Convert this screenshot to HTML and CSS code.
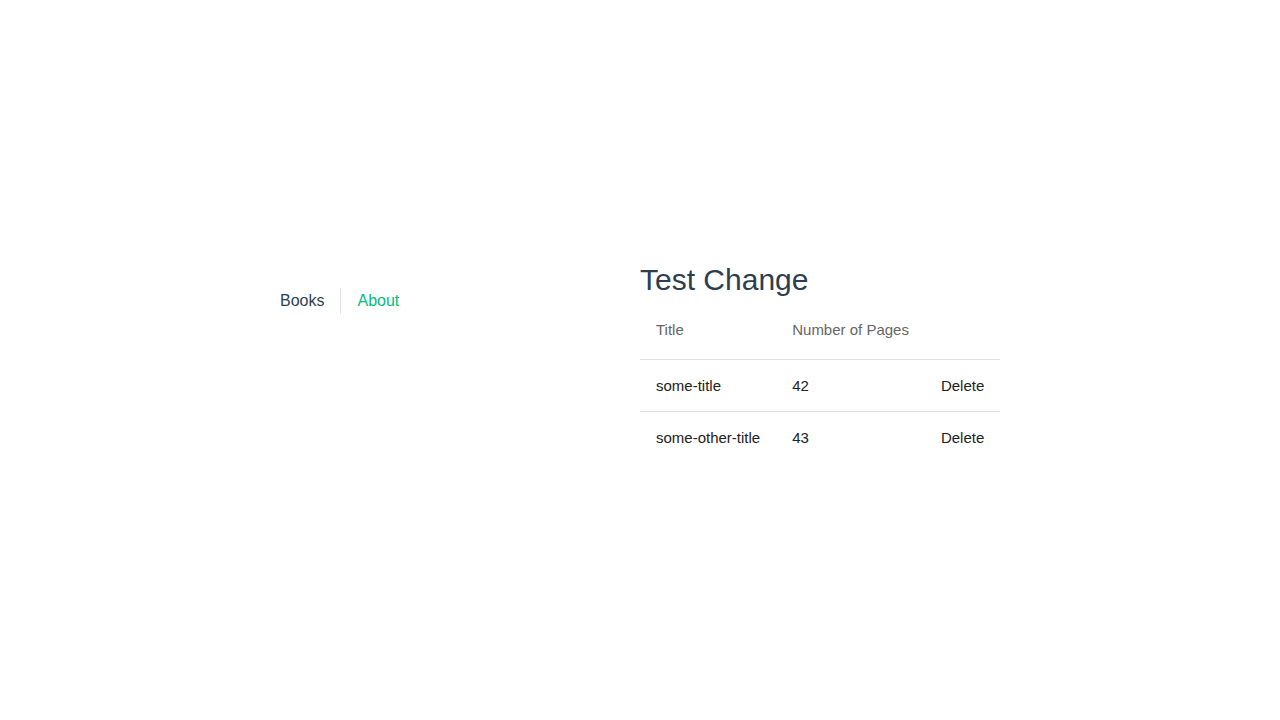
FILE: index.html
```html
<!DOCTYPE html>
<html lang="en">
<head>
<meta charset="utf-8">
<title>Books</title>
<link rel="stylesheet" href="styles.css">
</head>
<body>
<div class="app">
  <header class="header">
    <nav class="nav">
      <a class="nav-link" href="#">Books</a>
      <a class="nav-link active" href="#">About</a>
    </nav>
  </header>
  <main class="main">
    <h1 class="title">Test Change</h1>
    <table class="table">
      <thead>
        <tr><th>Title</th><th>Number of Pages</th><th></th></tr>
      </thead>
      <tbody>
        <tr><td>some-title</td><td>42</td><td>Delete</td></tr>
        <tr><td>some-other-title</td><td>43</td><td>Delete</td></tr>
      </tbody>
    </table>
  </main>
</div>
</body>
</html>
```
FILE: styles.css
```css
* { box-sizing: border-box; }
html, body { margin: 0; padding: 0; }
body {
  min-height: 100vh;
  display: flex;
  align-items: center;
  font-family: "Liberation Sans", Arial, sans-serif;
  color: #2c3e50;
  background: #fff;
}
.app {
  width: 1280px;
  padding: 0 32px;
  display: grid;
  grid-template-columns: 1fr 1fr;
}
.header {
  display: flex;
  align-items: flex-start;
  padding-left: 232px;
  padding-top: 31px;
}
.nav {
  display: flex;
  font-size: 16px;
  line-height: 26px;
}
.nav-link {
  padding: 0 16px;
  color: #2c3e50;
  text-decoration: none;
  border-left: 1px solid #e4e4e4;
}
.nav-link:first-child { border-left: 0; }
.nav-link.active { color: #00bd7e; }
.main { padding: 0; }
.title {
  margin: 0 0 2px;
  font-size: 30px;
  font-weight: normal;
  line-height: 45px;
  color: #2c3e50;
}
.table {
  border-collapse: collapse;
  font-size: 15px;
}
.table th {
  text-align: left;
  font-weight: normal;
  color: #666;
  height: 56px;
  padding: 0 16px 3px;
  border-bottom: 1px solid #e0e0e0;
}
.table td {
  height: 52px;
  padding: 0 16px 1px;
  color: #222;
  border-bottom: 1px solid #e0e0e0;
}
.table tbody tr:last-child td { border-bottom: 0; }
```
